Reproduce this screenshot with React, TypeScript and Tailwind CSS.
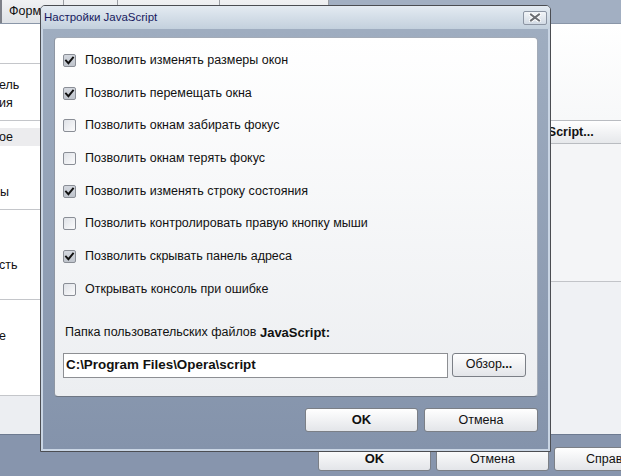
import React from "react";

const options = [
  { label: "Позволить изменять размеры окон", checked: true },
  { label: "Позволить перемещать окна", checked: true },
  { label: "Позволить окнам забирать фокус", checked: false },
  { label: "Позволить окнам терять фокус", checked: false },
  { label: "Позволить изменять строку состояния", checked: true },
  { label: "Позволить контролировать правую кнопку мыши", checked: false },
  { label: "Позволить скрывать панель адреса", checked: true },
  { label: "Открывать консоль при ошибке", checked: false },
];

function CheckBox({ checked }: { checked: boolean }) {
  return (
    <div
      className={
        "w-[13px] h-[13px] rounded-[2px] border border-[#8a8e96] flex items-center justify-center " +
        (checked ? "bg-gradient-to-b from-[#d4d8df] to-[#bfc4cc]" : "bg-gradient-to-br from-[#dfe2e7] to-[#fbfbfc]")
      }
    >
      {checked && (
        <svg width="11" height="11" viewBox="0 0 11 11">
          <path d="M2 5.6 L4.4 8.2 L9 2.6" fill="none" stroke="#111" strokeWidth="1.9" strokeLinecap="square" />
        </svg>
      )}
    </div>
  );
}

function Btn({ children, bold, className }: { children: React.ReactNode; bold?: boolean; className?: string }) {
  return (
    <div
      className={
        "h-[24px] shrink-0 rounded-[3px] border border-[#7b7f86] bg-gradient-to-b from-[#ffffff] to-[#e3e5e9] flex items-center justify-center text-[12.5px] text-[#111] " +
        (bold ? "font-bold " : "") +
        (className || "")
      }
    >
      {children}
    </div>
  );
}

function Sidebar() {
  return (
    <div className="w-[120px] h-full bg-white flex flex-col text-[12.5px] text-[#111] overflow-hidden">
      <div className="h-[39px] shrink-0" />
      <div className="h-px bg-[#c4c6ca] shrink-0" />
      <div className="h-[56px] shrink-0 flex flex-col pt-[12px] leading-[18px]">
        <span className="-ml-[1px]">ель</span>
        <span className="-ml-[1px]">ия</span>
      </div>
      <div className="h-px bg-[#c4c6ca] shrink-0" />
      <div className="h-[88px] shrink-0 flex flex-col pt-[7px]">
        <div className="h-[18px] bg-[#ececee] flex items-center leading-none">
          <span className="-ml-[1px]">ое</span>
        </div>
        <div className="mt-[37px] leading-[18px]">ы</div>
      </div>
      <div className="h-px bg-[#c4c6ca] shrink-0" />
      <div className="h-[89px] shrink-0 pt-[46px] leading-[18px]">
        <span className="-ml-[1px]">сть</span>
      </div>
      <div className="h-px bg-[#c4c6ca] shrink-0" />
      <div className="h-[95px] shrink-0 pt-[27px] leading-[18px]">
        <span className="-ml-[1px]">е</span>
      </div>
      <div className="h-px bg-[#c4c6ca] shrink-0" />
      <div className="flex-1 bg-[#eceef2]" />
    </div>
  );
}

function Dialog() {
  return (
    <div className="absolute left-[40px] top-[5px] w-[511px] h-[447px] border border-[#4b4d52] rounded-t-[5px] overflow-hidden flex flex-col bg-[#c9d5e4]">
      <div className="h-[23px] shrink-0 bg-gradient-to-b from-[#e4ebf2] to-[#c3d0dd] flex items-center pl-[3px] pr-[3px]">
        <span className="text-[11.5px] text-[#17195e]">Настройки JavaScript</span>
        <div className="ml-auto w-[24px] h-[14px] rounded-[2px] border border-[#8c95a3] bg-gradient-to-b from-[#f2f5f8] to-[#d3dbe5] flex items-center justify-center">
          <svg width="12" height="9" viewBox="0 0 12 9">
            <path d="M2 1.5 L10 7.5 M10 1.5 L2 7.5" stroke="#fff" strokeWidth="4" strokeLinecap="square" />
            <path d="M2 1.5 L10 7.5 M10 1.5 L2 7.5" stroke="#6c6f74" strokeWidth="2" strokeLinecap="square" />
          </svg>
        </div>
      </div>
      <div className="flex-1 mx-[2px] mb-[2px] bg-gradient-to-b from-[#9fadc0] to-[#8493ab] flex flex-col pl-[11px] pr-[10px] pt-[8px]">
        <div className="h-[360px] rounded-[4px] border border-[#a3abb7] border-b-[#6f7784] border-l-[#8e96a3] bg-gradient-to-b from-[#ffffff] to-[#eceef1] flex flex-col pt-[6px] pl-[8px]">
          {options.map((o) => (
            <div key={o.label} className="h-[32.7px] flex items-center">
              <CheckBox checked={o.checked} />
              <span className="ml-[9px] text-[12.5px] text-[#111]">{o.label}</span>
            </div>
          ))}
          <div className="mt-[19px] h-[16px] flex items-center text-[12.5px] text-[#111] pl-[2px]">
            Папка пользовательских файлов&nbsp;<b className="text-[13px]">JavaScript:</b>
          </div>
          <div className="mt-[12px] flex items-start gap-[4px]">
            <div className="w-[385px] h-[25px] border border-[#8d8f93] bg-white flex items-center pl-[2px] text-[13.4px] font-bold text-[#111]">
              C:\Program Files\Opera\script
            </div>
            <Btn className="w-[74px]">
              Обзор<b>...</b>
            </Btn>
          </div>
        </div>
        <div className="mt-[11px] flex justify-end gap-[6px]">
          <Btn bold className="w-[113px] text-[13px]">
            OK
          </Btn>
          <Btn className="w-[114px]">Отмена</Btn>
        </div>
      </div>
    </div>
  );
}

export default function App() {
  return (
    <div className="relative w-[621px] h-[476px] overflow-hidden bg-[#8795ad] font-['Liberation_Sans',Arial,sans-serif]">
      <div className="h-[24px] flex border-b border-[#8a96a8]">
        <div className="w-[329px] bg-gradient-to-b from-[#f0f1f3] to-[#dfe2e6] flex items-stretch">
          <div className="w-[2px] border-l border-r border-[#7d8088]" />
          <div className="w-[62px] border-r border-[#9a9da3] flex items-center pl-[7px] text-[12.5px] text-[#111] overflow-hidden">
            Формат
          </div>
          <div className="w-[54px] border-r border-[#9a9da3]" />
          <div className="w-[102px] border-r border-[#9a9da3]" />
          <div className="flex-1 border-r border-[#9a9da3]" />
        </div>
        <div className="flex-1 bg-[#a2afc2]" />
      </div>
      <div className="h-[411px] flex border-b border-[#6d7a90]">
        <Sidebar />
        <div className="flex-1 flex flex-col">
          <div className="h-[96px] bg-gradient-to-b from-white to-[#f7f8f9]" />
          <div className="h-[24px] border-t border-b border-[#b9bcc1] bg-gradient-to-b from-white to-[#e6e8eb] flex items-center pl-[400px] text-[12.5px] font-bold text-[#111]">
            JavaScript...
          </div>
          <div className="h-[138px] bg-[#f4f5f7] border-b border-[#c2c4c8]" />
          <div className="flex-1 bg-[#eff1f4]" />
        </div>
      </div>
      <div className="flex gap-[5px] pl-[318px] pt-[12px]">
        <Btn bold className="w-[113px] text-[13px]">
          OK
        </Btn>
        <Btn className="w-[113px]">Отмена</Btn>
        <Btn className="w-[113px]">Справка</Btn>
      </div>
      <Dialog />
    </div>
  );
}
